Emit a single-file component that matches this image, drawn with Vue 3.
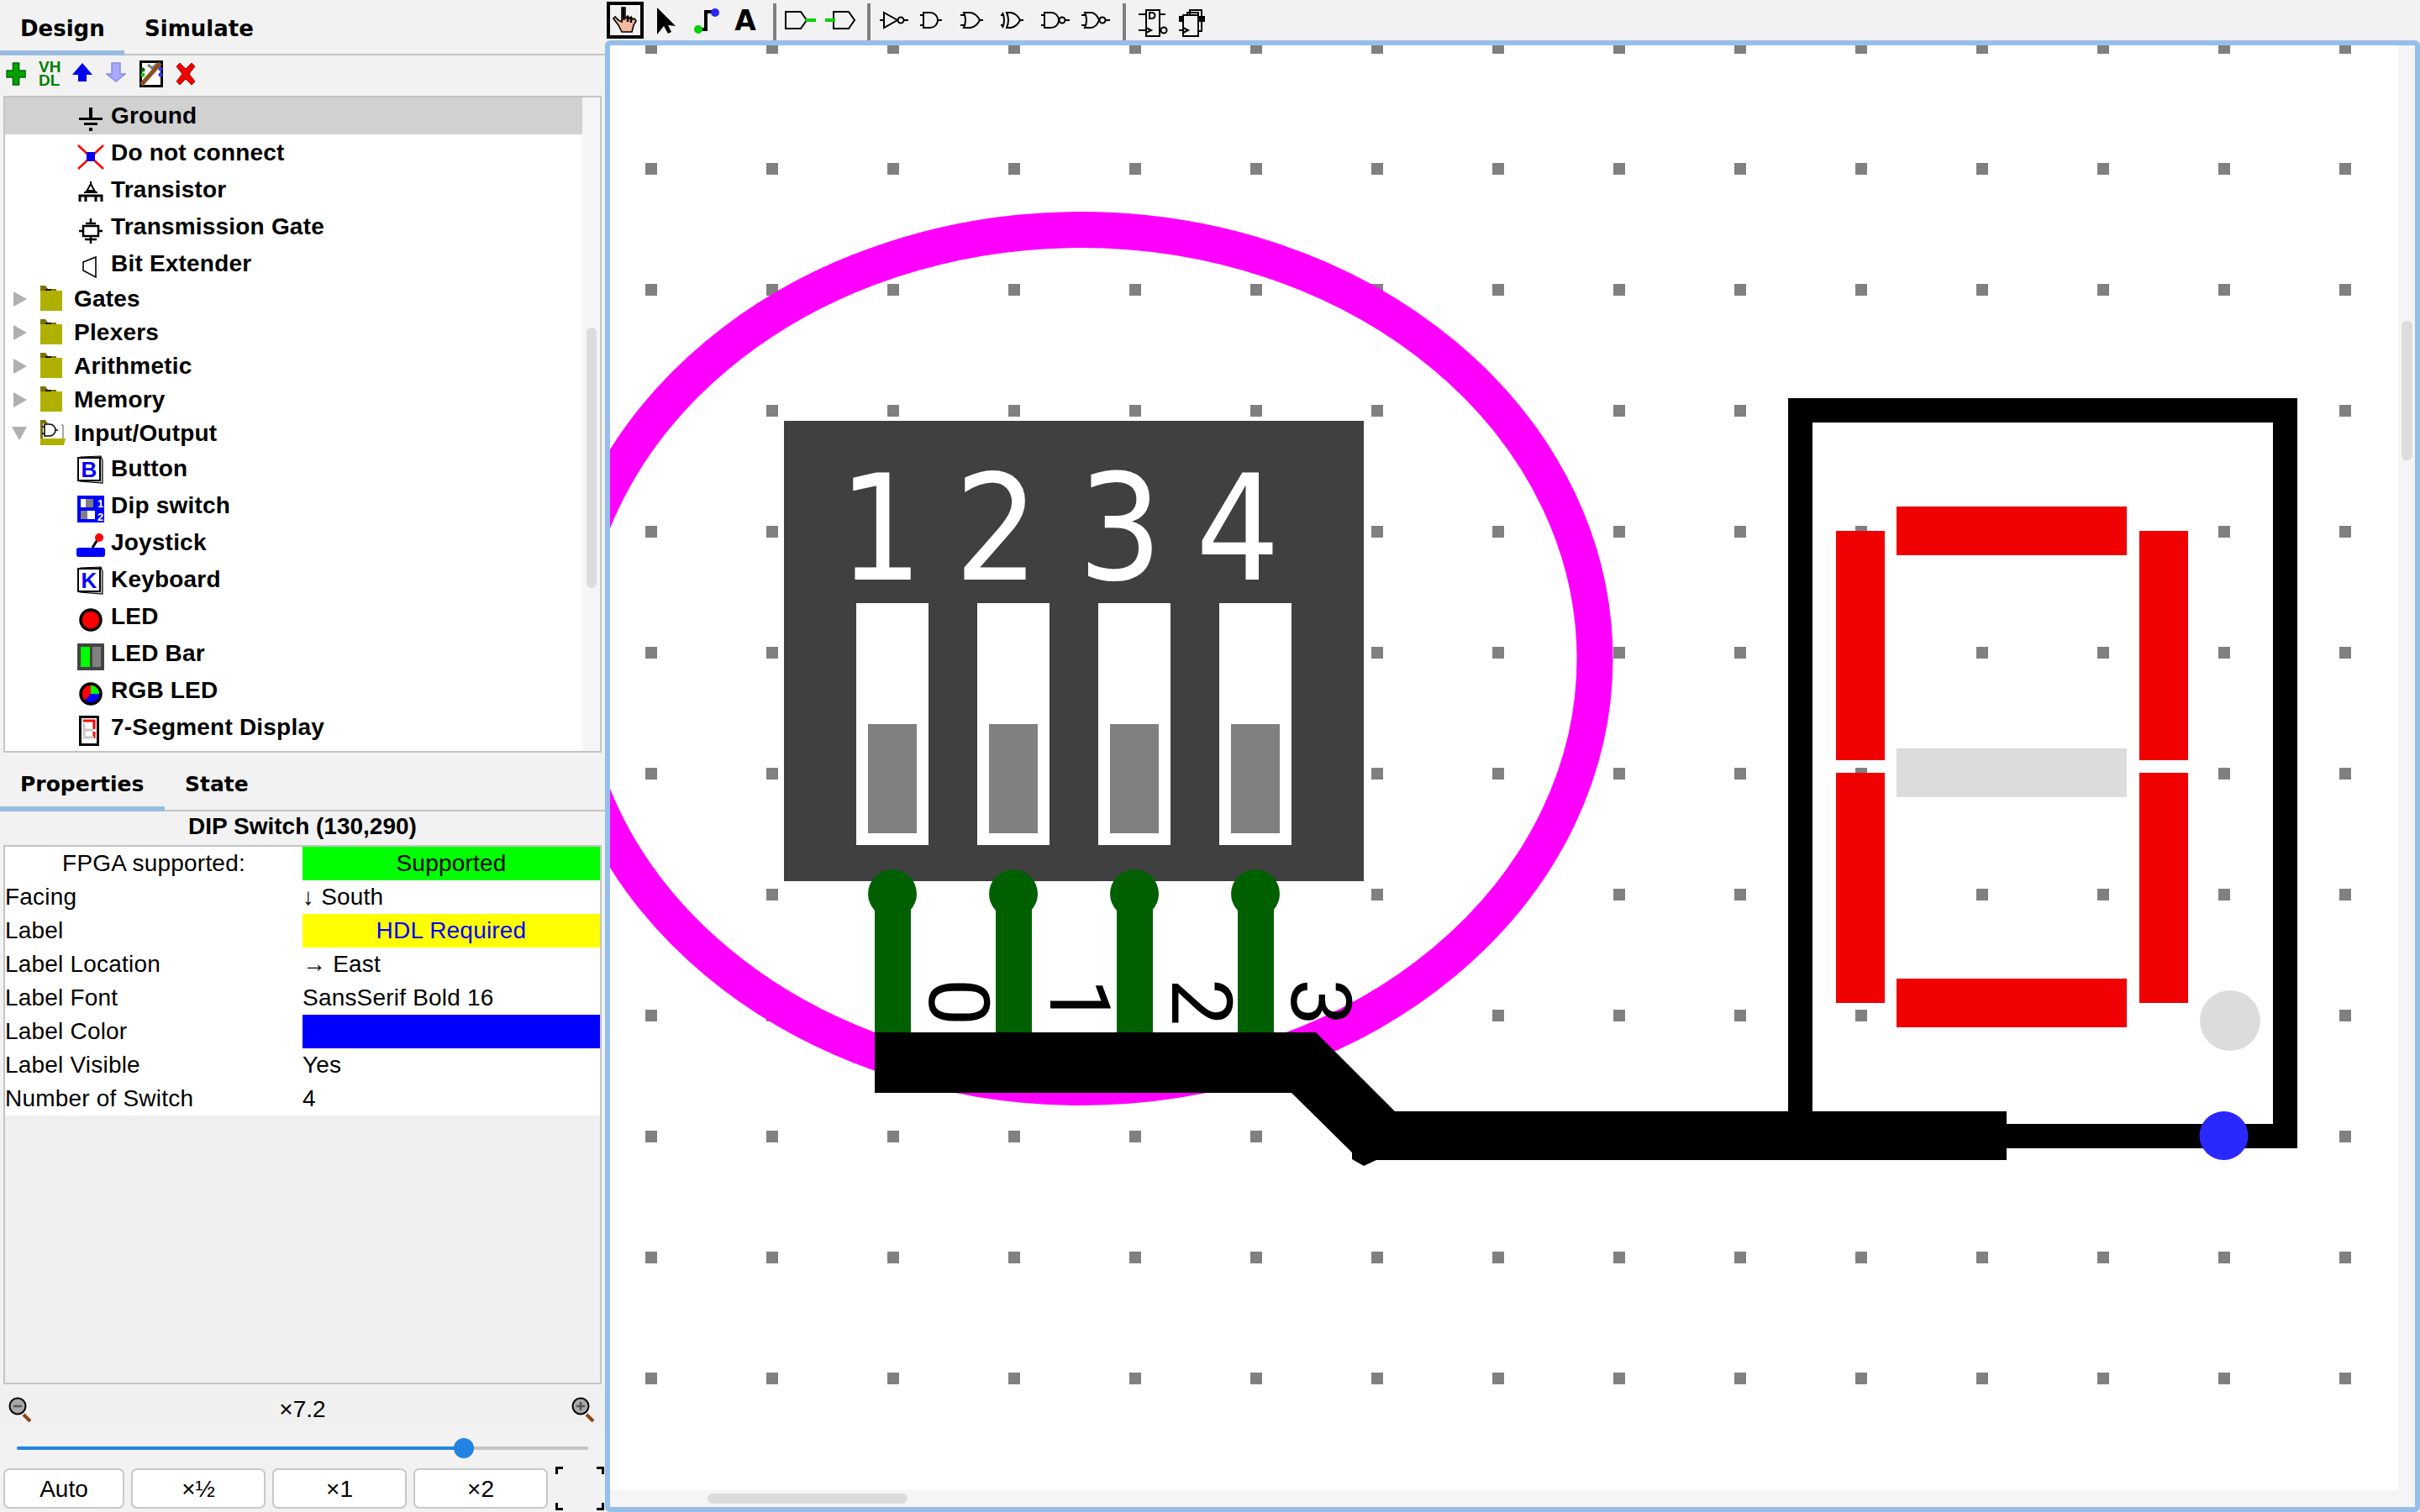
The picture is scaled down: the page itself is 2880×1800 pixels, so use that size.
<template>
  <div class="app">
    <!-- panel izquierdo -->
    <aside class="side">
      <div class="tabs">
        <div class="tab active design-tab">Design</div>
        <div class="tab">Simulate</div>
      </div>

      <div class="lib-tools">
        <svg width="24" height="32" viewBox="0 0 24 32"><path d="M8 3h8v9h8v8h-8v9H8v-9H0v-8h8z" transform="translate(1 0) scale(.92 1)" fill="#00a000" stroke="#006800" stroke-width="1.5"/></svg>
        <div class="vhdl">VH<br />DL</div>
        <svg width="24" height="32" viewBox="0 0 24 32"><path d="M12 3L24 17h-7v8H7v-8H0z" fill="#0000ee"/></svg>
        <svg width="24" height="32" viewBox="0 0 24 32"><path d="M7 3h10v13h6L12 25 1 16h6z" fill="#a8a8ff" stroke="#8c8ce8" stroke-width="1.5"/></svg>
        <svg width="28" height="32" viewBox="0 0 28 32">
          <rect x="1.5" y="1.5" width="25" height="29" fill="#fff" stroke="#000" stroke-width="3" />
          <circle cx="4" cy="11" r="2.5" fill="#006400" /><circle cx="4" cy="17" r="2.5" fill="#00d000" />
          <circle cx="25" cy="10" r="2.5" fill="#3030ff" /><circle cx="25" cy="17" r="2.5" fill="#3030ff" />
          <path d="M10 5l5 4 6-5" fill="none" stroke="#808080" stroke-width="3" />
          <path d="M2 29L25 3" stroke="#8b4f20" stroke-width="5" />
        </svg>
        <svg width="24" height="32" viewBox="0 0 24 32"><path d="M5 3l7 7 7-7 4 4-7 9 7 9-4 4-7-7-7 7-4-4 7-9-7-9z" fill="#f00000" stroke="#b00000" stroke-width="1" /></svg>
      </div>

      <div class="tree">
        <div
          v-for="row in treeRows"
          :key="row.name"
          class="tree-row"
          :class="[row.kind, { selected: row.name === 'Ground' }]"
        >
          <span v-if="row.kind !== 'leaf'" class="arrow" :class="{ open: row.kind === 'open' }"></span>

          <svg v-if="row.kind === 'closed'" class="folder" width="30" height="40" viewBox="0 0 30 40">
            <path d="M0 4h6l3 4h10v4H0z" fill="#7a7000" />
            <rect x="6" y="8" width="7" height="2" fill="#111" />
            <rect x="0" y="10" width="26" height="24" fill="#b0b000" />
          </svg>
          <svg v-else-if="row.kind === 'open'" class="folder" width="30" height="40" viewBox="0 0 30 40">
            <path d="M0 4h6l3 4h2v26H0z" fill="#7a7000" />
            <rect x="3" y="8" width="22" height="20" fill="#fff" />
            <path d="M25 10h2v18h-2" fill="none" stroke="#555" stroke-width="1" />
            <path d="M5 9h6a7 7 0 0 1 0 14H5zM18 16h3M2 12h3M2 20h3" fill="none" stroke="#000" stroke-width="1.5" />
            <path d="M0 26h30l-2 8H0z" fill="#b0b000" />
          </svg>

          <svg v-else class="leaf-icon" width="32" height="44" viewBox="0 0 32 44">
            <g v-if="row.icon === 'ground'" fill="#000">
              <rect x="14" y="12" width="4" height="13" /><rect x="2" y="24" width="28" height="3" />
              <rect x="8" y="30" width="16" height="3" /><rect x="14" y="36" width="4" height="4" />
            </g>
            <g v-else-if="row.icon === 'nc'">
              <path d="M1 13l30 28M31 13L1 41" stroke="#ff0000" stroke-width="2.5" />
              <rect x="11" y="21" width="10" height="11" fill="#0000ee" />
            </g>
            <g v-else-if="row.icon === 'transistor'" fill="none" stroke="#000" stroke-width="3">
              <path d="M16 12v3M11.5 23l4.5-8 4.5 8z" stroke-width="2" />
              <path d="M3 36v-7h26v7M10 36V29M22 36V29" />
              <path d="M8 25h16" stroke-width="2" />
            </g>
            <g v-else-if="row.icon === 'tgate'" fill="none" stroke="#000" stroke-width="2.5">
              <path d="M16 12v6M10 18h12M16 33v9M9 37h14" /><rect x="7" y="21" width="18" height="12" />
              <path d="M2 27h5M25 27h5" />
            </g>
            <g v-else-if="row.icon === 'ext'">
              <path d="M7 20l15-6v24l-15-8z" fill="none" stroke="#000" stroke-width="1.6" />
            </g>
            <g v-else-if="row.icon === 'button' || row.icon === 'keyboard'">
              <path d="M4 8l24-1 2 5v27l-27-2z" fill="#d0d0d0" stroke="#000" stroke-width="1.2" />
              <rect x="1" y="9" width="26" height="27" fill="#fff" stroke="#000" stroke-width="2" />
              <text x="14" y="32" class="key-letter">{{ row.icon === 'button' ? 'B' : 'K' }}</text>
            </g>
            <g v-else-if="row.icon === 'dip'">
              <rect x="0" y="10" width="32" height="32" fill="#0000ff" />
              <rect x="4" y="14" width="15" height="10" fill="#fff" /><rect x="10" y="14" width="9" height="10" fill="#808080" />
              <rect x="4" y="28" width="15" height="10" fill="#808080" /><rect x="12" y="28" width="9" height="10" fill="#fff" />
              <text x="24" y="24" class="dip-num">1</text><text x="24" y="40" class="dip-num">2</text>
            </g>
            <g v-else-if="row.icon === 'joystick'">
              <path d="M18 28l7-11" stroke="#000" stroke-width="3" />
              <circle cx="26" cy="16" r="5" fill="#ff0000" />
              <rect x="-1" y="28" width="34" height="11" rx="3" fill="#0000ff" />
            </g>
            <g v-else-if="row.icon === 'led'">
              <circle cx="16" cy="26" r="12" fill="#ff0000" stroke="#000" stroke-width="3.5" />
            </g>
            <g v-else-if="row.icon === 'ledbar'">
              <rect x="0" y="10" width="32" height="32" fill="#444" />
              <rect x="4" y="14" width="11" height="24" fill="#00ff00" /><rect x="18" y="14" width="10" height="24" fill="#808080" />
            </g>
            <g v-else-if="row.icon === 'rgb'">
              <circle cx="16" cy="26" r="12" fill="#0000ff" />
              <path d="M16 26V14A12 12 0 0 1 28 26z" fill="#00ff00" />
              <path d="M16 26V14A12 12 0 0 0 8 35z" fill="#ff0000" />
              <circle cx="16" cy="26" r="12" fill="none" stroke="#000" stroke-width="3.5" />
            </g>
            <g v-else-if="row.icon === 'seven'">
              <rect x="3.5" y="9.5" width="21" height="33" fill="#fff" stroke="#000" stroke-width="3" />
              <path d="M7 14h13v10M20 27v8" fill="none" stroke="#ff0000" stroke-width="3" />
              <path d="M8 17v17h12M9 25h10" fill="none" stroke="#c8c8c8" stroke-width="3" />
            </g>
          </svg>

          <span class="tree-label">{{ row.name }}</span>
        </div>
        <div class="vscroll"><div class="vthumb"></div></div>
      </div>

      <div class="tabs tabs-props">
        <div class="tab active props-tab">Properties</div>
        <div class="tab">State</div>
      </div>

      <div class="prop-title">DIP Switch (130,290)</div>

      <div class="prop-box">
        <div v-for="p in props" :key="p.label" class="prop-row">
          <div class="prop-label" :class="{ centered: p.center }">{{ p.label }}</div>
          <div class="prop-value" :class="p.cls">{{ p.value }}</div>
        </div>
      </div>

      <div class="zoom-row">
        <svg width="30" height="30" viewBox="0 0 30 30">
          <path d="M18 21l8 8" stroke="#8b4513" stroke-width="4" />
          <circle cx="11" cy="11" r="9.5" fill="#a8a8a8" stroke="#000" stroke-width="2" />
          <path d="M6 11h10" stroke="#555" stroke-width="2.5" />
        </svg>
        <span class="zoom-val">×7.2</span>
        <svg width="30" height="30" viewBox="0 0 30 30">
          <path d="M18 21l8 8" stroke="#8b4513" stroke-width="4" />
          <circle cx="11" cy="11" r="9.5" fill="#a8a8a8" stroke="#000" stroke-width="2" />
          <path d="M6 11h10M11 6v10" stroke="#555" stroke-width="2.5" />
        </svg>
      </div>

      <div class="slider">
        <div class="slider-fill"></div>
        <div class="slider-thumb"></div>
      </div>

      <div class="zoom-buttons">
        <button class="zbtn auto">Auto</button>
        <button class="zbtn">×½</button>
        <button class="zbtn">×1</button>
        <button class="zbtn">×2</button>
        <div class="fit">
          <i class="c tl"></i><i class="c tr"></i><i class="c bl"></i><i class="c br"></i>
        </div>
      </div>
    </aside>

    <main class="main">
      <div class="toolbar">
        <!-- herramientas -->
        <svg class="tb" viewBox="0 0 48 48">
          <rect x="4" y="4" width="40" height="40" fill="none" stroke="#000" stroke-width="4" />
          <path d="M20 9h4v13l3-3 2 3 2-2 2 3 2-1 2 3-3 5-2 8H20l-4-8-6-8 2-2 4 4 4 2z" fill="#f4b9a0" stroke="#000" stroke-width="1.6" />
          <path d="M22 9v15M27 20v6M31 21v6" stroke="#000" stroke-width="2.5" />
        </svg>
        <svg class="tb" viewBox="0 0 48 48"><path d="M14 9l22 22-9-1 4 8-4 2-5-9-8 10z" fill="#000" /></svg>
        <svg class="tb" viewBox="0 0 48 48">
          <path d="M15 35h9V14h11" fill="none" stroke="#000" stroke-width="4" />
          <circle cx="15" cy="35" r="5" fill="#00d000" /><circle cx="35" cy="15" r="5" fill="#2a28ff" />
        </svg>
        <svg class="tb" viewBox="0 0 48 48"><text x="23" y="36" class="tool-a">A</text></svg>
        <div class="sep"></div>
        <svg class="tb" viewBox="0 0 48 48">
          <path d="M7 14h18l7 10-7 10H7z" fill="none" stroke="#000" stroke-width="2" />
          <rect x="31" y="22" width="12" height="4" fill="#00d000" />
        </svg>
        <svg class="tb" viewBox="0 0 48 48">
          <path d="M16 14h18l7 10-7 10H16z" fill="none" stroke="#000" stroke-width="2" />
          <rect x="6" y="22" width="12" height="4" fill="#00d000" />
        </svg>
        <div class="sep"></div>
        <!-- compuertas -->
        <svg class="tb" viewBox="0 0 48 48">
          <g class="gate"><path d="M12 15l16 9-16 9zM7 24h5M36 24h5" /><circle cx="32" cy="24" r="3.5" /></g>
        </svg>
        <svg class="tb" viewBox="0 0 48 48">
          <g class="gate"><path d="M11 15h8a9 9 0 0 1 0 18h-8zM7 18h4M7 30h4M28 24h5" /></g>
        </svg>
        <svg class="tb" viewBox="0 0 48 48">
          <g class="gate"><path d="M11 15h8q7 1 11 9-4 8-11 9h-8q4-9 0-18zM7 18h6M7 30h6M30 24h4" /></g>
        </svg>
        <svg class="tb" viewBox="0 0 48 48">
          <g class="gate"><path d="M14 15h5q7 1 11 9-4 8-11 9h-5q4-9 0-18zM9 15q4 9 0 18M7 18h4M7 30h4M30 24h4" /></g>
        </svg>
        <svg class="tb" viewBox="0 0 48 48">
          <g class="gate"><path d="M11 15h8a9 9 0 0 1 0 18h-8zM7 18h4M7 30h4M36 24h5" /><circle cx="32" cy="24" r="3.5" /></g>
        </svg>
        <svg class="tb" viewBox="0 0 48 48">
          <g class="gate"><path d="M11 15h8q6 1 9 9-3 8-9 9h-8q4-9 0-18zM7 18h6M7 30h6M36 24h5" /><circle cx="32" cy="24" r="3.5" /></g>
        </svg>
        <div class="sep"></div>
        <svg class="tb" viewBox="0 0 48 48">
          <g class="gate">
            <rect x="20" y="12" width="16" height="31" />
            <path d="M11 17h9M36 17h7M11 36h9M20 33l6 3-6 3M24 15h3a3 3 0 0 1 0 7h-3z" />
            <circle cx="41" cy="36" r="3.5" />
          </g>
        </svg>
        <svg class="tb" viewBox="0 0 48 48">
          <g class="gate">
            <path d="M24 18v-6h14v25h-4M21 18v-3h13v3" />
            <rect x="16" y="18" width="18" height="25" fill="#f2f2f2" />
            <path d="M11 36h5M16 33l6 3-6 3" />
            <rect x="36" y="20" width="5" height="5" fill="#000" />
            <rect x="12" y="20" width="4" height="5" fill="#000" />
          </g>
        </svg>
      </div>

      <div class="canvas">
        <svg class="board" viewBox="726 54 2148 1740" width="2148" height="1740">
          <rect v-for="d in dots" :key="d.key" :x="d.x" :y="d.y" width="14" height="14" fill="#808080" />

          <ellipse cx="1286" cy="784" rx="612" ry="510.5" fill="none" stroke="#ff00ff" stroke-width="43" />

          <!-- dip switch -->
          <rect x="933" y="501" width="690" height="548" fill="#404040" />
          <text
            v-for="n in dipNums"
            :key="n.t"
            class="dip-big"
            :transform="`translate(${n.x} 690) scale(.9 1)`"
          >{{ n.t }}</text>
          <g v-for="x in pinX" :key="x">
            <rect :x="x - 43" y="718" width="86" height="288" fill="#fff" />
            <rect :x="x - 29" y="862" width="58" height="130" fill="#808080" />
            <rect :x="x - 21" y="1064" width="43" height="170" fill="#006000" />
            <circle :cx="x" cy="1064" r="29" fill="#006000" />
          </g>
          <text
            v-for="(x, i) in labelX"
            :key="x"
            class="pin-num"
            :transform="`translate(${x} 1193) rotate(90)`"
          >{{ i }}</text>

          <!-- bus -->
          <path d="M1041 1229H1566L1660 1323H2388V1381H1638L1623 1388L1609 1380V1372L1537 1301H1041Z" fill="#000" />

          <!-- 7 segmentos -->
          <path d="M2128 474H2734V1367H2388V1338H2705V503H2157V1326H2128Z" fill="#000" />
          <rect x="2257" y="603" width="274" height="58" fill="#f00000" />
          <rect x="2257" y="891" width="274" height="58" fill="#dcdcdc" />
          <rect x="2257" y="1165" width="274" height="58" fill="#f00000" />
          <rect x="2185" y="632" width="58" height="273" fill="#f00000" />
          <rect x="2185" y="920" width="58" height="274" fill="#f00000" />
          <rect x="2546" y="632" width="58" height="273" fill="#f00000" />
          <rect x="2546" y="920" width="58" height="274" fill="#f00000" />
          <circle cx="2654" cy="1215" r="36" fill="#dcdcdc" />
          <circle cx="2646.5" cy="1352" r="29" fill="#2a28ff" />
        </svg>

        <div class="hbar"><div class="hthumb"></div></div>
        <div class="vbar"><div class="vbar-thumb"></div></div>
      </div>
    </main>
  </div>
</template>

<script setup>
const treeRows = [
  { name: 'Ground', kind: 'leaf', icon: 'ground' },
  { name: 'Do not connect', kind: 'leaf', icon: 'nc' },
  { name: 'Transistor', kind: 'leaf', icon: 'transistor' },
  { name: 'Transmission Gate', kind: 'leaf', icon: 'tgate' },
  { name: 'Bit Extender', kind: 'leaf', icon: 'ext' },
  { name: 'Gates', kind: 'closed' },
  { name: 'Plexers', kind: 'closed' },
  { name: 'Arithmetic', kind: 'closed' },
  { name: 'Memory', kind: 'closed' },
  { name: 'Input/Output', kind: 'open' },
  { name: 'Button', kind: 'leaf', icon: 'button' },
  { name: 'Dip switch', kind: 'leaf', icon: 'dip' },
  { name: 'Joystick', kind: 'leaf', icon: 'joystick' },
  { name: 'Keyboard', kind: 'leaf', icon: 'keyboard' },
  { name: 'LED', kind: 'leaf', icon: 'led' },
  { name: 'LED Bar', kind: 'leaf', icon: 'ledbar' },
  { name: 'RGB LED', kind: 'leaf', icon: 'rgb' },
  { name: '7-Segment Display', kind: 'leaf', icon: 'seven' },
]

const props = [
  { label: 'FPGA supported:', value: 'Supported', center: true, cls: 'ok' },
  { label: 'Facing', value: '↓ South' },
  { label: 'Label', value: 'HDL Required', cls: 'warn' },
  { label: 'Label Location', value: '→ East' },
  { label: 'Label Font', value: 'SansSerif Bold 16' },
  { label: 'Label Color', value: '', cls: 'swatch' },
  { label: 'Label Visible', value: 'Yes' },
  { label: 'Number of Switch', value: '4' },
]

// rejilla de puntos del lienzo
const dots = []
for (let r = 0; r < 12; r++) {
  for (let c = 0; c < 15; c++) {
    dots.push({ key: `${r}-${c}`, x: 768 + 144 * c, y: 50 + 144 * r })
  }
}

const pinX = [1062, 1206, 1350, 1494]
const labelX = [1140, 1284, 1429, 1571]
const dipNums = [
  { t: '1', x: 998 },
  { t: '2', x: 1136 },
  { t: '3', x: 1283 },
  { t: '4', x: 1423 },
]
</script>

<style>
html,
body {
  margin: 0;
  background: #f2f2f2;
}
</style>

<style scoped>
.app {
  display: flex;
  width: 2880px;
  height: 1800px;
  overflow: hidden;
  background: #f2f2f2;
  font-family: "Liberation Sans", Arial, sans-serif;
  color: #000;
}

.side {
  width: 720px;
  flex: none;
  display: flex;
  flex-direction: column;
}

.tabs {
  display: flex;
  height: 66px;
  box-sizing: border-box;
  border-bottom: 2px solid #c4c4c4;
  font-family: "DejaVu Sans", sans-serif;
  font-weight: 700;
  font-size: 26px;
}

.tabs-props {
  height: 70px;
  font-size: 25px;
}

.tab {
  padding: 19px 26px 0 24px;
  box-sizing: border-box;
}

.tabs-props .tab {
  padding-top: 23px;
}

.tab.active {
  padding-left: 24px;
  border-bottom: 6px solid #98bce0;
  margin-bottom: -2px;
}

.design-tab {
  width: 148px;
}

.props-tab {
  width: 196px;
}

.lib-tools {
  display: grid;
  grid-template-columns: 39px 40px 40px 40px 43px 24px;
  height: 48px;
  padding: 6px 0 0 7px;
  box-sizing: border-box;
}

.vhdl {
  font-size: 19px;
  line-height: 16px;
  font-weight: 700;
  color: #008000;
}

.tree {
  position: relative;
  margin-left: 4px;
  width: 712px;
  height: 782px;
  box-sizing: border-box;
  border: 2px solid #c4c4c4;
  background: #fff;
  overflow: hidden;
}

.tree-row {
  display: flex;
  align-items: center;
  width: 687px;
  height: 44px;
  font-size: 28px;
  letter-spacing: 0.2px;
  font-weight: 700;
}

.tree-row.closed,
.tree-row.open {
  height: 40px;
}

.tree-row.leaf {
  padding-left: 86px;
  box-sizing: border-box;
}

.tree-row.selected {
  background: #d1d1d1;
}

.leaf-icon {
  margin-right: 8px;
  flex: none;
  overflow: visible;
}

.arrow {
  margin-left: 10px;
  width: 0;
  height: 0;
  border-top: 9px solid transparent;
  border-bottom: 9px solid transparent;
  border-left: 16px solid #b0b0b0;
}

.arrow.open {
  margin-left: 8px;
  border-left: 9px solid transparent;
  border-right: 9px solid transparent;
  border-top: 16px solid #b0b0b0;
  border-bottom: 0;
}

.folder {
  margin-left: 16px;
  margin-right: 10px;
  flex: none;
}

.key-letter {
  font-size: 26px;
  font-weight: 700;
  fill: #0000ff;
  text-anchor: middle;
  font-family: "Liberation Sans", sans-serif;
  letter-spacing: 0;
}

.dip-num {
  font-size: 13px;
  font-weight: 700;
  fill: #fff;
}

.vscroll {
  position: absolute;
  top: 0;
  right: 0;
  bottom: 0;
  width: 21px;
  background: #f5f5f5;
}

.vthumb {
  position: absolute;
  top: 274px;
  left: 5px;
  width: 12px;
  height: 310px;
  border-radius: 6px;
  background: #dcdcdc;
}

.prop-title {
  height: 40px;
  line-height: 36px;
  text-align: center;
  font-size: 28px;
  font-weight: 700;
}

.prop-box {
  margin-left: 4px;
  width: 712px;
  height: 642px;
  box-sizing: border-box;
  border: 2px solid #c4c4c4;
  background: #f0f0f0;
}

.prop-row {
  display: grid;
  grid-template-columns: 354px 354px;
  height: 40px;
  line-height: 40px;
  font-size: 28px;
  letter-spacing: 0.2px;
  background: #fff;
  white-space: nowrap;
}

.prop-label.centered {
  text-align: center;
}

.prop-value.ok {
  background: #00ff00;
  text-align: center;
}

.prop-value.warn {
  background: #ffff00;
  color: #0000ff;
  text-align: center;
}

.prop-value.swatch {
  background: #0000ff;
}

.zoom-row {
  display: flex;
  justify-content: space-between;
  align-items: center;
  height: 56px;
  padding: 3px 10px 0;
  box-sizing: border-box;
  background: #f0f0f0;
  font-size: 28px;
}

.zoom-val {
  line-height: 56px;
}

.slider {
  position: relative;
  height: 4px;
  margin: 18px 0 22px 20px;
  width: 680px;
  border-radius: 2px;
  background: #c4c4c4;
}

.slider-fill {
  width: 532px;
  height: 4px;
  border-radius: 2px;
  background: #2383e2;
}

.slider-thumb {
  position: absolute;
  left: 520px;
  top: -10px;
  width: 24px;
  height: 24px;
  border-radius: 50%;
  background: #2383e2;
}

.zoom-buttons {
  display: flex;
  align-items: center;
  height: 48px;
  padding-left: 4px;
  gap: 8px;
}

.zbtn {
  width: 160px;
  height: 48px;
  box-sizing: border-box;
  padding: 2px 0 0;
  border: 2px solid #c8c8c8;
  border-radius: 7px;
  background: #fff;
  font-family: "Liberation Sans", sans-serif;
  font-size: 28px;
  color: #000;
}

.zbtn.auto {
  width: 144px;
}

.fit {
  position: relative;
  width: 58px;
  height: 52px;
  margin-left: 1px;
}

.c {
  position: absolute;
  width: 6px;
  height: 6px;
  border: 0 solid #000;
}

.tl {
  left: 0;
  top: 0;
  border-width: 3px 0 0 3px;
}

.tr {
  right: 0;
  top: 0;
  border-width: 3px 3px 0 0;
}

.bl {
  left: 0;
  bottom: 0;
  border-width: 0 0 3px 3px;
}

.br {
  right: 0;
  bottom: 0;
  border-width: 0 3px 3px 0;
}

.main {
  flex: 1;
  display: flex;
  flex-direction: column;
}

.toolbar {
  display: flex;
  height: 48px;
  flex: none;
}

.tb {
  width: 48px;
  height: 48px;
  flex: none;
}

.sep {
  width: 4px;
  height: 44px;
  margin: 4px 4px 0 8px;
  background: #808080;
  flex: none;
}

.gate {
  fill: none;
  stroke: #000;
  stroke-width: 2;
}

.tool-a {
  font-family: "DejaVu Sans", sans-serif;
  font-weight: 700;
  font-size: 33px;
  text-anchor: middle;
  fill: #000;
}

.canvas {
  position: relative;
  flex: 1;
  box-sizing: border-box;
  border: 6px solid #95bfe9;
  border-radius: 6px;
  background: #fff;
  overflow: hidden;
}

.board {
  display: block;
}

.dip-big {
  font-family: "DejaVu Sans", sans-serif;
  font-size: 175px;
  fill: #fff;
}

.pin-num {
  font-family: Roboto, "Liberation Sans", sans-serif;
  font-size: 100px;
  fill: #000;
  text-anchor: middle;
  dominant-baseline: central;
}

.hbar {
  position: absolute;
  left: 0;
  right: 20px;
  bottom: 0;
  height: 20px;
  background: #f5f5f5;
}

.hthumb {
  position: absolute;
  left: 116px;
  top: 4px;
  width: 238px;
  height: 12px;
  border-radius: 6px;
  background: #dcdcdc;
}

.vbar {
  position: absolute;
  top: 0;
  right: 0;
  bottom: 0;
  width: 20px;
  background: #f5f5f5;
}

.vbar-thumb {
  position: absolute;
  left: 4px;
  top: 328px;
  width: 13px;
  height: 166px;
  border-radius: 6px;
  background: #dcdcdc;
}
</style>
